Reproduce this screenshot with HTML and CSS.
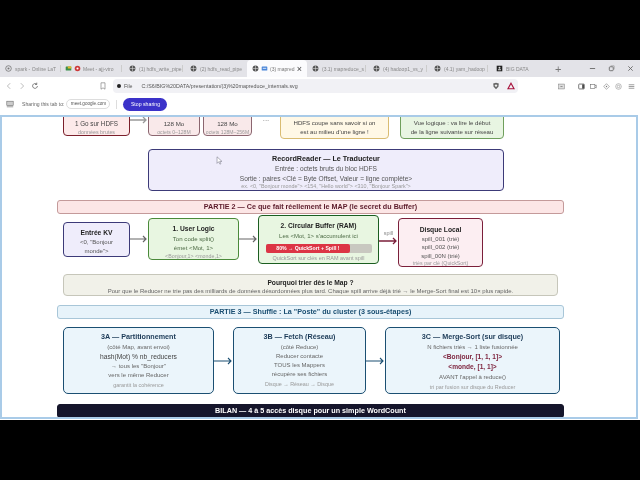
FILE: index.html
```html
<!DOCTYPE html>
<html lang="en">
<head>
  <meta charset="UTF-8">
  <title>(3) mapreduce_internals.svg</title>
  <link rel="stylesheet" href="styles.css">
</head>
<body>
  <div class="screen">
    <div class="tabs">
      <div class="tab tab-spark"><svg class="ic" viewBox="0 0 10 10"><circle cx="5" cy="5" r="4" fill="none" stroke="#666"/><circle cx="5" cy="5" r="1.5" fill="#777"/></svg><span>spark - Online LaT</span></div>
      <div class="tab tab-meet"><svg class="ic" viewBox="0 0 10 10"><rect x="1" y="2" width="8" height="6" rx="1" fill="#3a8f4a"/><rect x="4" y="2" width="5" height="3" fill="#e5b92c"/></svg><svg class="ic" viewBox="0 0 10 10"><circle cx="5" cy="5" r="4" fill="#cc3a3a"/><circle cx="5" cy="5" r="1.5" fill="#fff"/></svg><span>Meet - ajj-vtro</span></div>
      <div class="tab"><svg class="ic" viewBox="0 0 10 10"><circle cx="5" cy="5" r="4.2" fill="#555"/><path d="M1 5h8M5 1v8" stroke="#ddd" stroke-width=".8"/></svg><span>(1) hdfs_write_pipe</span></div>
      <div class="tab tab-before"><svg class="ic" viewBox="0 0 10 10"><circle cx="5" cy="5" r="4.2" fill="#555"/><path d="M1 5h8M5 1v8" stroke="#ddd" stroke-width=".8"/></svg><span>(2) hdfs_read_pipe</span></div>
      <div class="tab tab-active"><svg class="ic" viewBox="0 0 10 10"><circle cx="5" cy="5" r="4.2" fill="#555"/><path d="M1 5h8M5 1v8" stroke="#ddd" stroke-width=".8"/></svg><svg class="ic" viewBox="0 0 10 10"><rect x="1" y="2" width="8" height="6" rx="1" fill="#4a86d8"/><rect x="2.5" y="4" width="5" height="1.5" fill="#cfe0f8"/></svg><span>(3) mapred</span><b class="tab-x">×</b></div>
      <div class="tab"><svg class="ic" viewBox="0 0 10 10"><circle cx="5" cy="5" r="4.2" fill="#555"/><path d="M1 5h8M5 1v8" stroke="#ddd" stroke-width=".8"/></svg><span>(3.1) mapreduce_s</span></div>
      <div class="tab"><svg class="ic" viewBox="0 0 10 10"><circle cx="5" cy="5" r="4.2" fill="#555"/><path d="M1 5h8M5 1v8" stroke="#ddd" stroke-width=".8"/></svg><span>(4) hadoop1_vs_y</span></div>
      <div class="tab"><svg class="ic" viewBox="0 0 10 10"><circle cx="5" cy="5" r="4.2" fill="#555"/><path d="M1 5h8M5 1v8" stroke="#ddd" stroke-width=".8"/></svg><span>(4.1) yarn_hadoop</span></div>
      <div class="tab tab-last"><svg class="ic" viewBox="0 0 10 10"><rect x="1" y="1" width="8" height="8" fill="#222"/><circle cx="5" cy="4" r="1.4" fill="#ddd"/><rect x="3" y="6" width="4" height="1.5" fill="#ddd"/></svg><span>BIG DATA</span></div>
      <div class="tab-new">+</div>
      <div class="win-btns">
        <svg viewBox="0 0 8 8"><path d="M1 4h6" stroke="#666"/></svg>
        <svg viewBox="0 0 8 8"><rect x="1.5" y="2" width="4.5" height="4.5" rx="1" fill="none" stroke="#666"/><path d="M3 1h4v4" fill="none" stroke="#888" stroke-width=".7"/></svg>
        <svg viewBox="0 0 8 8"><path d="M1.5 1.5l5 5M6.5 1.5l-5 5" stroke="#666"/></svg>
      </div>
    </div>

    <div class="toolbar">
      <svg class="nav" viewBox="0 0 10 10"><path d="M6.5 1.5L3 5l3.5 3.5" fill="none" stroke="#aaa"/></svg>
      <svg class="nav" viewBox="0 0 10 10"><path d="M3.5 1.5L7 5 3.5 8.5" fill="none" stroke="#aaa"/></svg>
      <svg class="nav" viewBox="0 0 10 10"><path d="M8 5a3 3 0 1 1-1-2.3M7.2 .8v2.3H5" fill="none" stroke="#555" stroke-width=".9"/></svg>
      <svg class="bookmark" viewBox="0 0 10 10"><path d="M2.5 1h5v8L5 7.3 2.5 9z" fill="none" stroke="#777" stroke-width=".8"/></svg>
      <div class="urlbar">
        <i class="info"></i>
        <span class="url-file">File</span>
        <span class="url-path">C:/S6/BIG%20DATA/presentation/(3)%20mapreduce_internals.svg</span>
        <svg class="url-shield" viewBox="0 0 10 10"><path d="M5 .8l3.5 1.2-.5 4L5 9.2 2 6l-.5-4z" fill="#666"/><circle cx="5" cy="4.5" r="1.5" fill="#eee"/></svg>
        <svg class="url-warn" viewBox="0 0 10 10"><path d="M5 1.500l3.800 7H1.200z" fill="none" stroke="#a8123c" stroke-width="1.400"/></svg>
      </div>
      <div class="tool-icons">
        <svg class="tool-first" viewBox="0 0 10 10"><rect x="1" y="1.500" width="8" height="7" fill="#ddd" stroke="#777" stroke-width=".7"/><path d="M3.500 5h3" stroke="#555" stroke-width=".8"/></svg>
        <svg viewBox="0 0 10 10"><rect x="1" y="1.500" width="8" height="7" rx="1" fill="none" stroke="#444"/><rect x="6" y="2" width="2.500" height="6" fill="#444"/></svg>
        <svg viewBox="0 0 10 10"><rect x="1" y="2" width="6" height="6" fill="none" stroke="#666" stroke-width=".8"/><path d="M7 4l2-1v4L7 6" fill="none" stroke="#666" stroke-width=".8"/></svg>
        <svg viewBox="0 0 10 10"><path d="M5 1l4 4-4 4-4-4z" fill="none" stroke="#777" stroke-width=".8"/><circle cx="5" cy="5" r="1" fill="#777"/></svg>
        <svg viewBox="0 0 10 10"><circle cx="5" cy="5" r="4" fill="none" stroke="#888" stroke-width=".8"/><circle cx="5" cy="5" r="1.800" fill="none" stroke="#888" stroke-width=".8"/></svg>
        <svg viewBox="0 0 10 10"><path d="M1 2.500h8M1 5h8M1 7.500h8" stroke="#555" stroke-width=".8"/></svg>
      </div>
    </div>

    <div class="sharebar">
      <svg class="share-ic" viewBox="0 0 10 10"><rect x="1" y="1.500" width="8" height="5.500" fill="#ccc" stroke="#666" stroke-width=".7"/><path d="M1 8.500h8" stroke="#666" stroke-width=".8"/></svg>
      <span class="share-txt">Sharing this tab to:</span>
      <span class="share-chip">meet.google.com</span>
      <i class="share-sep"></i>
      <span class="share-stop">Stop sharing</span>
    </div>

    <div class="page">
      <div class="frame">
        <div class="row row-1">
          <div class="box box-file">
            <div class="l9 b">Fichier</div>
            <div class="l9">1 Go sur HDFS</div>
            <div class="l8 sm">données brutes</div>
          </div>
          <svg class="arrow up-file" viewBox="0 0 18 8"><path d="M0 4h16M13 1l3 3-3 3" fill="none" stroke="#999" stroke-width="1.300"/></svg>
          <div class="box box-bloc bloc-1">
            <div class="l9 b">Bloc 1</div>
            <div class="l9">128 Mo</div>
            <div class="l8 sm">octets 0–128M</div>
          </div>
          <div class="box box-bloc bloc-2">
            <div class="l9 b">Bloc 2</div>
            <div class="l9">128 Mo</div>
            <div class="l8 sm">octets 128M–256M</div>
          </div>
          <div class="dots">···</div>
          <div class="box box-warn">
            <div class="l9">HDFS coupe sans savoir si on</div>
            <div class="l9">est au milieu d'une ligne !</div>
          </div>
          <div class="box box-ok">
            <div class="l9">Vue logique : va lire le début</div>
            <div class="l9">de la ligne suivante sur réseau</div>
          </div>
        </div>

        <div class="box box-reader">
          <div class="title">RecordReader — Le Traducteur</div>
          <div class="l9">Entrée : octets bruts du bloc HDFS</div>
          <div class="l9">Sortie : paires &lt;Clé = Byte Offset, Valeur = ligne complète&gt;</div>
          <div class="l7 sm">ex. &lt;0, "Bonjour monde"&gt; &lt;154, "Hello world"&gt; &lt;310, "Bonjour Spark"&gt;</div>
          <svg class="cursor" viewBox="0 0 8 11"><path d="M1 1v8l2-2 1.500 3 1.200-.6L4.300 6.600H7z" fill="#fff" stroke="#778" stroke-width=".7"/></svg>
        </div>

        <div class="banner banner-red">PARTIE 2 — Ce que fait réellement le MAP (le secret du Buffer)</div>

        <div class="row row-map">
          <div class="box box-kv">
            <div class="title">Entrée KV</div>
            <div class="l9">&lt;0, "Bonjour</div>
            <div class="l9">monde"&gt;</div>
          </div>
          <svg class="arrow a-18 map-arrow" viewBox="0 0 18 8"><path d="M0 4h16M13 1l3 3-3 3" fill="none" stroke="#666" stroke-width="1.200"/></svg>
          <div class="box box-logic">
            <div class="title">1. User Logic</div>
            <div class="l9">Ton code split()</div>
            <div class="l9">émet &lt;Mot, 1&gt;</div>
            <div class="l9 sm">&lt;Bonjour,1&gt; &lt;monde,1&gt;</div>
          </div>
          <svg class="arrow a-19 map-arrow" viewBox="0 0 19 8"><path d="M0 4h17M14 1l3 3-3 3" fill="none" stroke="#666" stroke-width="1.200"/></svg>
          <div class="box box-buffer">
            <div class="title">2. Circular Buffer (RAM)</div>
            <div class="l9">Les &lt;Mot, 1&gt; s'accumulent ici</div>
            <div class="bar"><div class="bar-fill" style="width: 80%">80% → QuickSort + Spill !</div></div>
            <div class="l9 sm">QuickSort sur clés en RAM avant spill</div>
          </div>
          <div class="spill">
            <span>spill</span>
            <svg class="arrow a-19" viewBox="0 0 19 8"><path d="M0 4h17M14 1l3 3-3 3" fill="none" stroke="#7b1f3a" stroke-width="1.300"/></svg>
          </div>
          <div class="box box-disk">
            <div class="title">Disque Local</div>
            <div class="l8">spill_001 (trié)</div>
            <div class="l8">spill_002 (trié)</div>
            <div class="l8">spill_00N (trié)</div>
            <div class="l6 sm">triés par clé (QuickSort)</div>
          </div>
        </div>

        <div class="box box-why">
          <div class="title">Pourquoi trier dès le Map ?</div>
          <div class="l9">Pour que le Reducer ne trie pas des milliards de données désordonnées plus tard. Chaque spill arrive déjà trié → le Merge-Sort final est 10× plus rapide.</div>
        </div>

        <div class="banner banner-blue">PARTIE 3 — Shuffle : La "Poste" du cluster (3 sous-étapes)</div>

        <div class="row row-shuffle">
          <div class="box box-step step-a">
            <div class="title">3A — Partitionnement</div>
            <div class="l10 mute">(côté Map, avant envoi)</div>
            <div class="l10 mid">hash(Mot) % nb_reducers</div>
            <div class="l9 mute">→ tous les "Bonjour"</div>
            <div class="l9 mute">vers le même Reducer</div>
            <div class="l10 sm">garantit la cohérence</div>
          </div>
          <svg class="arrow a-19" viewBox="0 0 19 8"><path d="M0 4h17M14 1l3 3-3 3" fill="none" stroke="#1b4f72" stroke-width="1.100"/></svg>
          <div class="box box-step step-b">
            <div class="title">3B — Fetch (Réseau)</div>
            <div class="l10 mute">(côté Reduce)</div>
            <div class="l9 mute">Reducer contacte</div>
            <div class="l9 mute">TOUS les Mappers</div>
            <div class="l9 mute">récupère ses fichiers</div>
            <div class="l10 sm">Disque → Réseau → Disque</div>
          </div>
          <svg class="arrow a-19" viewBox="0 0 19 8"><path d="M0 4h17M14 1l3 3-3 3" fill="none" stroke="#1b4f72" stroke-width="1.100"/></svg>
          <div class="box box-step step-c">
            <div class="title">3C — Merge-Sort (sur disque)</div>
            <div class="l10 mute">N fichiers triés → 1 liste fusionnée</div>
            <div class="l10 red">&lt;Bonjour, [1, 1, 1]&gt;</div>
            <div class="l10 red">&lt;monde, [1, 1]&gt;</div>
            <div class="l10 mute">AVANT l'appel à reduce()</div>
            <div class="l10 sm">tri par fusion sur disque du Reducer</div>
          </div>
        </div>

        <div class="banner banner-dark">BILAN — 4 à 5 accès disque pour un simple WordCount</div>
      </div>
    </div>
  </div>
</body>
</html>
```

FILE: styles.css
```css
html, body {
  margin: 0;
  background-color: #000;
}
.screen {
  width: 640px;
  height: 480px;
  padding: 60px 0;
  box-sizing: border-box;
  display: flex;
  flex-direction: column;
  font-family: "Liberation Sans", Arial, sans-serif;
  overflow: hidden;
  filter: blur(0.4px);
}

/* browser tabs */
.tabs {
  height: 17px;
  flex: none;
  display: flex;
  align-items: center;
  background-color: #e3e3e8;
  font-size: 5px;
  color: #888;
}
.tab {
  width: 61px;
  height: 17px;
  flex: none;
  box-sizing: border-box;
  padding-left: 7px;
  display: flex;
  align-items: center;
  gap: 3px;
  white-space: nowrap;
  position: relative;
}
.tab::after {
  content: "";
  position: absolute;
  right: 0;
  top: 5px;
  width: 1px;
  height: 7px;
  background-color: #ccc;
}
.tab-spark {
  padding-left: 5px;
}
.tab-meet {
  padding-left: 4px;
  gap: 2px;
}
.tab-active {
  width: 60px;
  margin-left: 3px;
  margin-right: -2px;
  padding-left: 5px;
  background-color: #fbfbfd;
  border-radius: 4px 4px 0 0;
  gap: 2px;
  color: #777;
}
.tab-active::after,
.tab-before::after {
  display: none;
}
.tab-x {
  margin-left: auto;
  margin-right: 5px;
  font-size: 9px;
  font-weight: normal;
  color: #444;
}
.tab-last {
  width: 50px;
  padding-left: 8px;
}
.tab-last::after {
  display: none;
}
.ic {
  width: 7px;
  height: 7px;
  flex: none;
}
.tab-new {
  width: 20px;
  margin-left: 17px;
  font-size: 11px;
  color: #777;
}
.win-btns {
  margin-left: auto;
  margin-right: 6px;
  display: flex;
  gap: 12px;
}
.win-btns svg {
  width: 7px;
  height: 7px;
}

/* address bar */
.toolbar {
  height: 18px;
  flex: none;
  display: flex;
  align-items: center;
  background-color: #fff;
  padding-left: 5px;
}
.nav {
  width: 8px;
  height: 8px;
  margin-right: 5px;
}
.bookmark {
  width: 8px;
  height: 8px;
  margin-left: 55px;
}
.urlbar {
  width: 405px;
  height: 14px;
  margin-left: 6px;
  flex: none;
  display: flex;
  align-items: center;
  background-color: #f1f1f5;
  border-radius: 4px;
  font-size: 5.3px;
  color: #555;
}
.info {
  width: 4px;
  height: 4px;
  margin-left: 4px;
  border-radius: 50%;
  background-color: #222;
}
.url-file {
  margin-left: 3px;
}
.url-path {
  margin-left: 9px;
  white-space: nowrap;
}
.url-shield {
  width: 8px;
  height: 8px;
  margin-left: auto;
}
.url-warn {
  width: 8px;
  height: 8px;
  margin: 0 3px 0 7px;
}
.tool-icons {
  margin-left: 40px;
  display: flex;
  gap: 5.5px;
}
.tool-icons svg {
  width: 7px;
  height: 7px;
}
.tool-first {
  margin-right: 7px;
}

/* sharing bar */
.sharebar {
  height: 18px;
  flex: none;
  display: flex;
  align-items: center;
  background-color: #fff;
  font-size: 5.1px;
  color: #666;
}
.share-ic {
  width: 8px;
  height: 8px;
  margin-left: 6px;
}
.share-txt {
  margin-left: 8px;
}
.share-chip {
  margin-left: 2px;
  width: 42px;
  height: 8px;
  line-height: 8px;
  text-align: center;
  border: 1px solid #ddd;
  border-radius: 5px;
  font-size: 4.6px;
  color: #555;
}
.share-sep {
  width: 1px;
  height: 9px;
  margin: 0 6px 0 6px;
  background-color: #ddd;
}
.share-stop {
  width: 44px;
  height: 13px;
  line-height: 13px;
  text-align: center;
  border-radius: 7px;
  background-color: #3b32c9;
  color: #fff;
  font-size: 5.2px;
}

/* svg page */
.page {
  flex: 1;
  background-color: #fff;
  padding: 2px 2px 1px 0;
  min-height: 0;
}
.frame {
  height: 100%;
  box-sizing: border-box;
  border: 2px solid #a9cbe8;
  background-color: #fff;
  overflow: hidden;
  color: #444;
  font-size: 6.6px;
  text-align: center;
  position: relative;
}
.row {
  display: flex;
  align-items: flex-start;
}
.box {
  box-sizing: border-box;
  border: 1px solid #444;
  border-radius: 4px;
  flex: none;
}
.title {
  font-size: 7.2px;
  font-weight: bold;
  line-height: 10px;
  color: #222;
}
.b {
  font-weight: bold;
}
.l6 { line-height: 6px; }
.l7 { line-height: 7px; }
.l8 { line-height: 8.3px; }
.l9 { line-height: 9px; }
.l10 { line-height: 10px; }
.sm {
  font-size: 5.4px;
  color: #999;
}
.mute {
  color: #666;
  font-size: 6px;
}
.mid {
  font-size: 6.7px;
  color: #444;
}
.red {
  font-size: 6.6px;
  font-weight: bold;
  color: #7b1f3a;
}
.arrow {
  flex: none;
  height: 8px;
}
.a-18 { width: 18px; }
.a-19 { width: 19px; }

/* first row, cut by the top of the frame */
.row-1 {
  height: 22px;
  align-items: flex-end;
  padding-left: 61px;
}
.box-file {
  width: 67px;
  height: 36px;
  margin-bottom: 3px;
  background-color: #fdeaea;
  border-color: #7b1f2b;
  font-size: 6.3px;
  padding-top: 9px;
}
.up-file {
  width: 18px;
  margin-bottom: 15px;
}
.box-bloc {
  height: 36px;
  margin-bottom: 3px;
  background-color: #f9e9ea;
  border-color: #8b6670;
  font-size: 6.2px;
  padding-top: 9px;
  white-space: nowrap;
}
.box-bloc .sm {
  font-size: 5.1px;
}
.bloc-1 { width: 52px; }
.bloc-2 { width: 49px; margin-left: 3px; }
.dots {
  width: 28px;
  flex: none;
  align-self: flex-start;
  color: #888;
  line-height: 8px;
}
.box-warn {
  width: 109px;
  height: 36px;
  background-color: #fff8e6;
  border-color: #d9bc72;
  font-size: 6.1px;
  padding-top: 15px;
}
.box-warn .l9,
.box-ok .l9 {
  line-height: 8.5px;
}
.box-ok {
  width: 104px;
  height: 36px;
  margin-left: 11px;
  background-color: #e8f5e2;
  border-color: #6f9f5c;
  font-size: 6.1px;
  padding-top: 15px;
}

.box-reader {
  width: 356px;
  height: 42px;
  margin: 10px 0 0 146px;
  padding-top: 4px;
  background-color: #efedfb;
  border-color: #3c3a78;
  color: #555;
  position: relative;
}
.box-reader .l9 {
  line-height: 9.5px;
}
.box-reader .sm {
  font-size: 5.4px;
}
.cursor {
  position: absolute;
  left: 67px;
  top: 6px;
  width: 7px;
  height: 9px;
}

.banner {
  box-sizing: border-box;
  height: 14px;
  line-height: 12px;
  border: 1px solid #bbb;
  border-radius: 3px;
  font-size: 7.2px;
  font-weight: bold;
}
.banner-red {
  width: 507px;
  margin: 9px 0 0 55px;
  background-color: #fce6e6;
  border-color: #c49a9a;
  color: #5b1a2a;
}
.banner-blue {
  width: 507px;
  margin: 9px 0 0 55px;
  background-color: #e7f3fa;
  border-color: #a8c6d8;
  color: #1b4f72;
}
.banner-dark {
  width: 507px;
  margin: 10px 0 0 55px;
  background-color: #15152b;
  border-color: #15152b;
  color: #fff;
}

.row-map {
  height: 52px;
  margin-top: 1px;
  padding-left: 61px;
}
.row-map .title {
  font-size: 6.7px;
}
.map-arrow {
  margin-top: 20px;
}
.box-kv {
  width: 67px;
  height: 35px;
  margin-top: 7px;
  padding-top: 5px;
  background-color: #efedfb;
  border-color: #3c3a78;
  color: #555;
  font-size: 6px;
}
.box-logic {
  width: 91px;
  height: 42px;
  margin-top: 3px;
  padding-top: 5px;
  background-color: #e8f6e1;
  border-color: #4a8a3a;
  color: #4d6b45;
  font-size: 6.1px;
}
.box-logic .sm {
  font-size: 5.3px;
}
.box-buffer {
  width: 121px;
  height: 49px;
  border: 1.5px solid #1b5e20;
  padding-top: 5px;
  background-color: #e8f6e1;
  color: #4d6b45;
  font-size: 6px;
}
.box-buffer .l9 {
  line-height: 10px;
}
.box-buffer .sm {
  font-size: 5.5px;
  line-height: 11px;
}
.bar {
  width: 106px;
  height: 9px;
  margin: 3px auto 0;
  border-radius: 2px;
  background-color: #c8c8c0;
  text-align: left;
}
.bar-fill {
  height: 9px;
  line-height: 9px;
  border-radius: 2px;
  background-color: #dc3545;
  color: #fff;
  font-size: 5.2px;
  font-weight: bold;
  text-align: center;
}
.spill {
  width: 19px;
  flex: none;
  margin-top: 15px;
  font-size: 5.5px;
  color: #888;
  line-height: 7px;
}
.spill .arrow {
  display: block;
}
.box-disk {
  width: 85px;
  height: 49px;
  margin-top: 3px;
  padding-top: 6px;
  background-color: #fceef2;
  border-color: #7b1f3a;
  color: #555;
  font-size: 6px;
}
.box-disk .sm {
  font-size: 5.3px;
}

.box-why {
  width: 495px;
  height: 22px;
  margin: 7px 0 0 61px;
  padding-top: 3px;
  background-color: #f1f1e9;
  border-color: #c6c6ba;
  white-space: nowrap;
  color: #666;
  font-size: 6px;
}
.box-why .title {
  line-height: 9px;
  font-size: 6.7px;
}

.row-shuffle {
  height: 67px;
  align-items: center;
  margin-top: 8px;
  padding-left: 61px;
}
.box-step {
  height: 67px;
  padding-top: 4px;
  background-color: #ebf5fb;
  border-color: #1b4f72;
  border-radius: 5px;
}
.box-step .title {
  color: #1b3a57;
}
.step-a { width: 151px; }
.step-b { width: 133px; }
.step-c { width: 175px; }
```
